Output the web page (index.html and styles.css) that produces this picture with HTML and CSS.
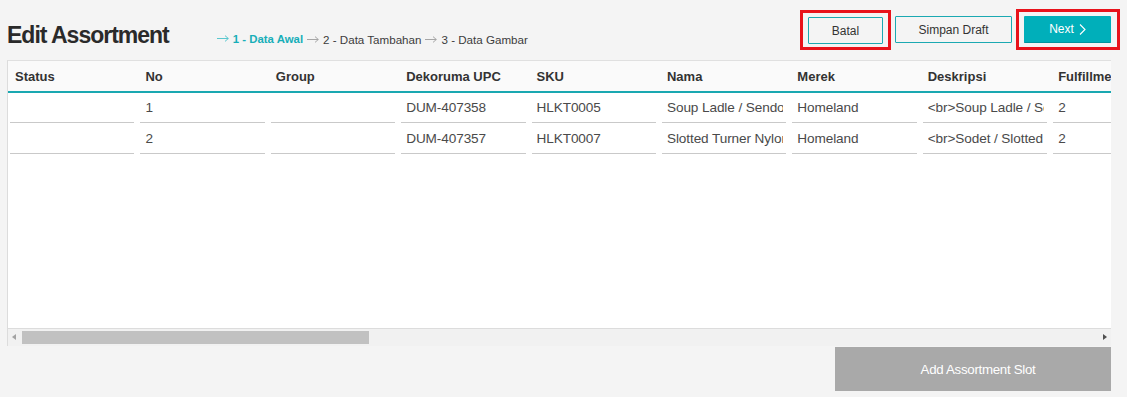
FILE: index.html
```html
<!DOCTYPE html>
<html lang="id">
<head>
<meta charset="utf-8">
<title>Edit Assortment</title>
<link rel="stylesheet" href="styles.css">
</head>
<body>
<div class="page">
  <header class="topbar">
    <div class="title-group">
      <h1 class="title">Edit Assortment</h1>
      <ol class="steps">
        <li class="step active"><svg class="arrow" width="12" height="7" viewBox="0 0 12 7"><path d="M0 3.5H11.3M8 0.6L11.3 3.5L8 6.4" fill="none" stroke="currentColor" stroke-width="1"/></svg>1 - Data Awal</li>
        <li class="step"><svg class="arrow" width="12" height="7" viewBox="0 0 12 7"><path d="M0 3.5H11.3M8 0.6L11.3 3.5L8 6.4" fill="none" stroke="currentColor" stroke-width="1"/></svg>2 - Data Tambahan</li>
        <li class="step"><svg class="arrow" width="12" height="7" viewBox="0 0 12 7"><path d="M0 3.5H11.3M8 0.6L11.3 3.5L8 6.4" fill="none" stroke="currentColor" stroke-width="1"/></svg>3 - Data Gambar</li>
      </ol>
    </div>
    <div class="actions">
      <button class="btn btn-outline btn-batal highlight">Batal</button>
      <button class="btn btn-outline btn-draft">Simpan Draft</button>
      <button class="btn btn-primary btn-next highlight">Next<svg class="chev" width="7" height="11" viewBox="0 0 7 11"><polyline points="1,0.5 6,5.5 1,10.5" fill="none" stroke="#ffffff" stroke-width="1.1"/></svg></button>
    </div>
  </header>

  <section class="grid-panel">
    <div class="grid-scroll">
      <table class="grid">
        <thead>
          <tr>
            <th>Status</th>
            <th>No</th>
            <th>Group</th>
            <th>Dekoruma UPC</th>
            <th>SKU</th>
            <th>Nama</th>
            <th>Merek</th>
            <th>Deskripsi</th>
            <th>Fulfillment</th>
          </tr>
        </thead>
        <tbody>
          <tr>
            <td><div class="cell"><span class="val"></span></div></td>
            <td><div class="cell"><span class="val">1</span></div></td>
            <td><div class="cell"><span class="val"></span></div></td>
            <td><div class="cell"><span class="val">DUM-407358</span></div></td>
            <td><div class="cell"><span class="val">HLKT0005</span></div></td>
            <td><div class="cell"><span class="val">Soup Ladle / Sendok Sayur</span></div></td>
            <td><div class="cell"><span class="val">Homeland</span></div></td>
            <td><div class="cell"><span class="val">&lt;br&gt;Soup Ladle / Sendok</span></div></td>
            <td><div class="cell"><span class="val">2</span></div></td>
          </tr>
          <tr>
            <td><div class="cell"><span class="val"></span></div></td>
            <td><div class="cell"><span class="val">2</span></div></td>
            <td><div class="cell"><span class="val"></span></div></td>
            <td><div class="cell"><span class="val">DUM-407357</span></div></td>
            <td><div class="cell"><span class="val">HLKT0007</span></div></td>
            <td><div class="cell"><span class="val">Slotted Turner Nylon</span></div></td>
            <td><div class="cell"><span class="val">Homeland</span></div></td>
            <td><div class="cell"><span class="val">&lt;br&gt;Sodet / Slotted Turner</span></div></td>
            <td><div class="cell"><span class="val">2</span></div></td>
          </tr>
        </tbody>
      </table>
    </div>
    <div class="hscroll">
      <span class="sb-arrow sb-left"></span>
      <div class="sb-track"><span class="sb-thumb"></span></div>
      <span class="sb-arrow sb-right"></span>
    </div>
  </section>

  <div class="footer">
    <button class="btn-add">Add Assortment Slot</button>
  </div>
</div>
</body>
</html>
```

FILE: styles.css
```css
* { box-sizing: border-box; }

html, body {
  margin: 0;
  padding: 0;
  background: #f4f4f4;
}

body {
  font-family: "Liberation Sans", Arial, sans-serif;
  color: #333333;
}

.page {
  width: 1127px;
  height: 397px;
  overflow: hidden;
}

/* ---------- top bar ---------- */
.topbar {
  height: 60px;
  display: flex;
  justify-content: space-between;
  align-items: flex-start;
  padding: 16px 16px 0 7px;
}

.title-group {
  display: flex;
  align-items: baseline;
  padding-top: 6px;
}

.title {
  margin: 0;
  font-size: 23px;
  line-height: 27px;
  font-weight: 700;
  letter-spacing: -1px;
  color: #2a2a2a;
}

.steps {
  list-style: none;
  margin: 0 0 0 48px;
  padding: 0;
  display: flex;
  font-size: 11.6px;
  color: #3c3c3c;
}

.step {
  margin-right: 4px;
  white-space: nowrap;
}

.step .arrow {
  color: #a6a6a6;
  margin-right: 4px;
  vertical-align: 1px;
}

.step.active {
  color: #17aeb8;
  font-weight: 700;
  font-size: 11.4px;
}

.step.active .arrow {
  color: #5ac7ce;
}

.actions {
  display: flex;
  align-items: flex-start;
}

.btn {
  position: relative;
  height: 27px;
  font-family: "Liberation Sans", Arial, sans-serif;
  font-size: 12px;
  padding: 0;
  cursor: pointer;
  border-radius: 1px;
}

.btn-outline {
  background: #f4f4f4;
  border: 1px solid #1ba9b2;
  color: #333333;
}

.btn-batal {
  width: 75px;
  margin-top: 1px;
}

.btn-draft {
  width: 117px;
  margin-left: 12px;
}

.btn-primary {
  background: #00afba;
  border: none;
  border-bottom: 1px solid #00949d;
  color: #ffffff;
}

.btn-next {
  width: 87px;
  margin-left: 12px;
  display: flex;
  align-items: center;
  justify-content: center;
}

.chev {
  margin-left: 5px;
  margin-top: 1px;
}

/* red annotation boxes lying over the buttons */
.highlight::after {
  content: "";
  position: absolute;
  top: -8px;
  bottom: -7px;
  left: -9px;
  right: -9px;
  border: 3px solid #e8131b;
  pointer-events: none;
}

.btn-next.highlight::after {
  top: -7px;
  bottom: -8px;
  left: -8px;
  right: -9px;
}

/* ---------- grid ---------- */
.grid-panel {
  margin: 0 16px 0 7px;
  border-top: 1px solid #e0e0e0;
  border-left: 1px solid #dcdcdc;
  background: #ffffff;
}

.grid-scroll {
  height: 268px;
  overflow: hidden;
  border-bottom: 1px solid #dcdcdc;
}

.grid {
  table-layout: fixed;
  border-collapse: collapse;
  width: 1173.6px;
}

.grid th,
.grid td {
  width: 130.4px;
}

.grid thead tr {
  background: #fafafa;
}

.grid th {
  height: 31px;
  padding: 0 0 0 7px;
  text-align: left;
  font-size: 13px;
  font-weight: 700;
  color: #333333;
  white-space: nowrap;
  overflow: hidden;
  border-bottom: 2px solid #1aa8b1;
}

.grid td {
  padding: 0 4px 0 2px;
}

.cell {
  height: 31px;
  border-bottom: 1px solid #c9c9c9;
  padding-left: 5px;
  display: flex;
  align-items: center;
}

.grid tbody tr:first-child .cell {
  height: 30px;
}

.val {
  display: block;
  flex: 1;
  min-width: 0;
  overflow: hidden;
  white-space: nowrap;
  margin-right: 3px;
  font-size: 13.6px;
  letter-spacing: -0.1px;
  color: #4a4a4a;
  line-height: 29px;
}

/* ---------- fake horizontal scrollbar ---------- */
.hscroll {
  height: 17px;
  background: #f1f1f1;
  display: flex;
  align-items: center;
}

.sb-arrow {
  width: 14px;
  height: 17px;
  position: relative;
}

.sb-left::before {
  content: "";
  position: absolute;
  left: 4px;
  top: 5px;
  border-top: 3.5px solid transparent;
  border-bottom: 3.5px solid transparent;
  border-right: 4px solid #a3a3a3;
}

.sb-right::before {
  content: "";
  position: absolute;
  left: 6px;
  top: 5px;
  border-top: 3.5px solid transparent;
  border-bottom: 3.5px solid transparent;
  border-left: 4px solid #505050;
}

.sb-track {
  flex: 1;
  height: 17px;
  padding: 2px 0 2px 0;
}

.sb-thumb {
  display: block;
  width: 347px;
  height: 13px;
  background: #c1c1c1;
}

/* ---------- footer ---------- */
.footer {
  display: flex;
  justify-content: flex-end;
  padding: 1px 16px 0 0;
}

.btn-add {
  width: 276px;
  height: 44px;
  border: none;
  padding: 0 0 0 10px;
  background: #a9a9a9;
  color: #ffffff;
  font-family: "Liberation Sans", Arial, sans-serif;
  font-size: 13.3px;
  letter-spacing: -0.3px;
  cursor: pointer;
}
```
